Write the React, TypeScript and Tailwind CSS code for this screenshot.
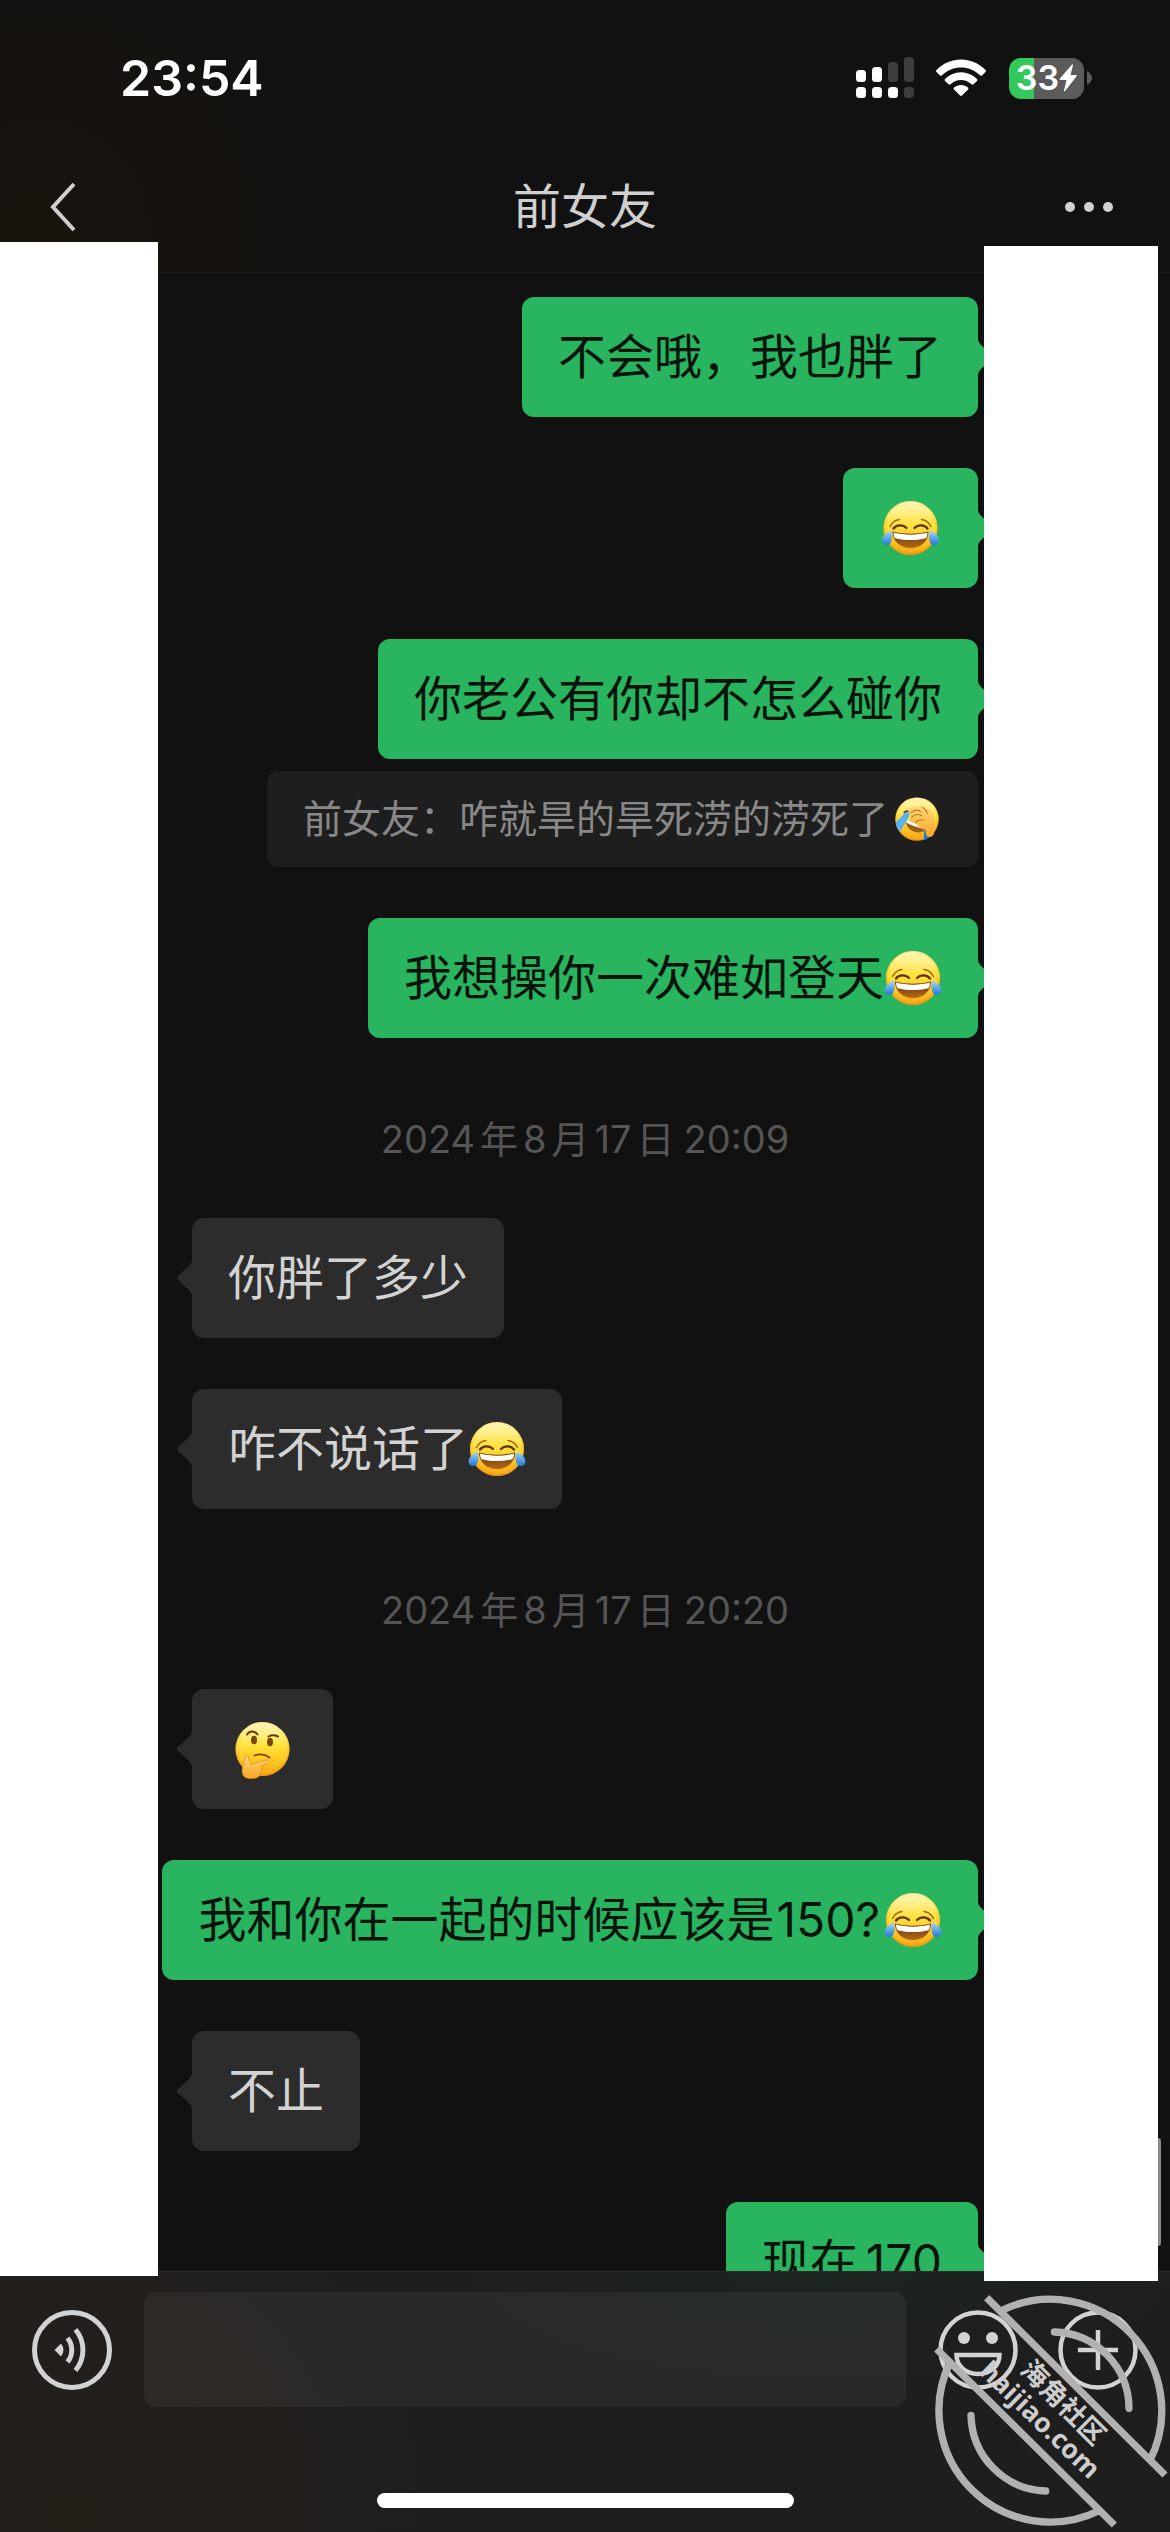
import type { ReactNode } from 'react'

type EmojiKind = 'joy' | 'facepalm' | 'thinking'

function FaceDefs({ id }: { id: string }) {
  return (
    <defs>
      <radialGradient id={`${id}-edge`} cx="50%" cy="46%" r="54%">
        <stop offset="0.78" stopColor="#ffde3a" stopOpacity="0" />
        <stop offset="1" stopColor="#e98a0c" />
      </radialGradient>
      <linearGradient id={`${id}-face`} x1="0" y1="0" x2="0" y2="1">
        <stop offset="0" stopColor="#fff4b8" />
        <stop offset="0.2" stopColor="#fff08a" />
        <stop offset="0.45" stopColor="#ffe13a" />
        <stop offset="0.75" stopColor="#fdc321" />
        <stop offset="1" stopColor="#f99c10" />
      </linearGradient>
      <linearGradient id={`${id}-tear`} x1="0" y1="0" x2="0" y2="1">
        <stop offset="0" stopColor="#a8dcf8" />
        <stop offset="1" stopColor="#2179d6" />
      </linearGradient>
      <linearGradient id={`${id}-mouth`} x1="0" y1="0" x2="0" y2="1">
        <stop offset="0" stopColor="#6b3206" />
        <stop offset="1" stopColor="#b06a18" />
      </linearGradient>
      <linearGradient id={`${id}-hand`} x1="0" y1="0" x2="0" y2="1">
        <stop offset="0" stopColor="#ffd980" />
        <stop offset="1" stopColor="#f9a51e" />
      </linearGradient>
    </defs>
  )
}

function Face({ id }: { id: string }) {
  return (
    <>
      <circle cx="30" cy="30" r="27" fill={`url(#${id}-face)`} />
      <circle cx="30" cy="30" r="27" fill={`url(#${id}-edge)`} />
    </>
  )
}

function Emoji({ kind, className }: { kind: EmojiKind; className: string }) {
  if (kind === 'joy') {
    return (
      <svg viewBox="0 0 60 60" className={className} role="img" aria-label="笑哭">
        <FaceDefs id="joy" />
        <Face id="joy" />
        <path d="M9.5 28.5C11.5 24.5 14.5 22 19 21.5" fill="none" stroke="#a8650f" strokeWidth="1.5" strokeLinecap="round" />
        <path d="M50.5 28.5C48.5 24.5 45.5 22 41 21.5" fill="none" stroke="#a8650f" strokeWidth="1.5" strokeLinecap="round" />
        <path d="M13 30.500C16 26.300 22.500 26.300 26 30" fill="none" stroke="#5f3208" strokeWidth="2.300" strokeLinecap="round" />
        <path d="M47 30.500C44 26.300 37.500 26.300 34 30" fill="none" stroke="#5f3208" strokeWidth="2.300" strokeLinecap="round" />
        <path d="M12 33.500C24 36.500 36 36.500 48 33.500C48 43.500 40 50 30 50S12 43.500 12 33.500Z" fill="url(#joy-mouth)" />
        <path d="M13 34.600C24 37.300 36 37.300 47 34.600C47 37 46.300 39.500 45.500 40.200C35 42.700 25 42.700 14.500 40.200C13.700 39.500 13 37 13 34.600Z" fill="#fff" />
        <path d="M10.500 32C12.500 39 11.500 47 6.500 47C0.500 47 0.500 40.500 4 37C6.500 34.500 8.500 33.500 10.500 32Z" fill="url(#joy-tear)" />
        <path d="M49.500 32C47.500 39 48.500 47 53.500 47C59.500 47 59.500 40.500 56 37C53.500 34.500 51.500 33.500 49.500 32Z" fill="url(#joy-tear)" />
      </svg>
    )
  }
  if (kind === 'facepalm') {
    return (
      <svg viewBox="0 0 60 60" className={className} role="img" aria-label="捂脸">
        <FaceDefs id="palm" />
        <Face id="palm" />
        <path d="M16 29C24 35 33 38 43 39C41 46 34 48 27 46C19 43.500 15 36 16 29Z" fill="#9c5a12" />
        <path d="M16 29C24 35 33 38 43 39L41.500 42C32 41.500 22 38 16.500 34Z" fill="#fff" />
        <path d="M15.500 21L22 22.500C18.500 31 13 39 8.500 45.500C5.500 42.500 4 38 3.500 34C8 30 12.500 25.500 15.500 21Z" fill="#58b1f0" />
        <path d="M39 43L46 45.500L45 53C42.500 55 40.500 55.700 38.500 56Z" fill="#1e78cf" />
        <path d="M14 21.500C16 19.500 19 20 22 20" stroke="#5f3208" strokeWidth="2" fill="none" strokeLinecap="round" />
        <path d="M18.500 20C20 16 25 13.500 29 14.500C34 12 42 14 46 19C51 24 53 33 52.500 40C52.500 46 51 52 46 52.500C42 53 40.500 49 41 44C36 42 31 39.500 28 35C23 34 21 31 23 28C19.500 26.500 19.500 23.500 22 22Z" fill="url(#palm-hand)" />
        <path d="M22 22.500C26 18.500 31 18 35 21M23 28C27 24 32 23.500 36 26M28 34.500C31 31 35 30.500 38 31.500M37 15.500C40 17.500 42 20 43 23" stroke="#c9780f" strokeWidth="1.300" fill="none" strokeLinecap="round" />
      </svg>
    )
  }
  return (
    <svg viewBox="0 0 60 60" className={className} role="img" aria-label="思考">
      <FaceDefs id="think" />
      <Face id="think" />
      <path d="M14.500 15.500C17 11.500 22 11.500 25 15.500" fill="none" stroke="#6b3a0a" strokeWidth="2" strokeLinecap="round" />
      <path d="M36 17.500C39 15.800 42.500 16 45.500 17.500" fill="none" stroke="#6b3a0a" strokeWidth="2" strokeLinecap="round" />
      <ellipse cx="21.500" cy="21" rx="3" ry="4.300" fill="#7a4508" />
      <ellipse cx="37.500" cy="23" rx="3" ry="4.300" fill="#7a4508" />
      <path d="M22 36.500C27 34.500 33 35.500 37 38.500" fill="none" stroke="#7a4508" strokeWidth="1.700" strokeLinecap="round" />
      <path
        d="M12.500 38C13 35 16 35.500 16 38.500L18.500 45C23 44.500 29 42 34 41C37.500 40.500 38 43.500 35 44.500L29 47C30 50 29 55 26.500 57.500C23.500 60 14.500 60.500 11.500 57.500C9 54.500 9.500 50 10.500 46Z"
        fill="url(#think-hand)"
        stroke="#d98b12"
        strokeWidth="0.700"
      />
    </svg>
  )
}

const JOY = <Emoji kind="joy" className="-mx-px size-[60px] shrink-0" />

function Tail({ side }: { side: 'left' | 'right' }) {
  return side === 'right' ? (
    <svg viewBox="0 0 16 36" className="absolute top-[42px] left-full h-9 w-4 text-[#29b560]" aria-hidden="true">
      <path d="M-1 0H0Q0 3 3 6L12 14Q16 18 12 22L3 30Q0 33 0 36H-1Z" fill="currentColor" />
    </svg>
  ) : (
    <svg viewBox="0 0 16 36" className="absolute top-[42px] right-full h-9 w-4 text-[#2c2c2c]" aria-hidden="true">
      <path d="M17 0H16Q16 3 13 6L2 16Q0 18 2 20L13 30Q16 33 16 36H17Z" fill="currentColor" />
    </svg>
  )
}

function Sent({ children }: { children: ReactNode }) {
  return (
    <div className="relative flex h-[120px] shrink-0 items-center self-end rounded-xl bg-[#29b560] px-9 text-5xl whitespace-nowrap text-[#06140b]">
      {children}
      <Tail side="right" />
    </div>
  )
}

function Received({ children }: { children: ReactNode }) {
  return (
    <div className="relative flex h-[120px] shrink-0 items-center self-start rounded-xl bg-[#2c2c2c] px-9 text-5xl whitespace-nowrap text-[#d3d3d3]">
      {children}
      <Tail side="left" />
    </div>
  )
}

function Timestamp({ time }: { time: string }) {
  return (
    <time className="flex h-[78px] shrink-0 items-end justify-center gap-[5px] text-[38px] leading-[56px] whitespace-nowrap text-[#555555]">
      <span>2024</span>
      <span>年</span>
      <span>8</span>
      <span>月</span>
      <span>17</span>
      <span>日</span>
      <span className="ml-1">{time}</span>
    </time>
  )
}

function StatusBar() {
  return (
    <div className="flex h-[141px] items-center justify-between pt-[15px] pr-[78px] pl-[120px] text-white">
      <span className="text-[50px] leading-none font-semibold">23:54</span>
      <div className="flex items-center">
        <svg viewBox="0 0 58 42" className="mr-[22px] h-[42px] w-[58px]" fill="currentColor" role="img" aria-label="信号">
          <rect x="0" y="13" width="10" height="12" rx="3.500" />
          <rect x="16" y="10" width="10" height="15" rx="3.500" />
          <rect x="32" y="5" width="10" height="20" rx="3.500" fill="#3d3d3d" />
          <rect x="48" y="0" width="10" height="25" rx="3.500" fill="#3d3d3d" />
          <rect x="0" y="30" width="10" height="11" rx="3.500" />
          <rect x="16" y="30" width="10" height="11" rx="3.500" />
          <rect x="32" y="30" width="10" height="11" rx="3.500" />
          <rect x="48" y="30" width="10" height="11" rx="3.500" fill="#3d3d3d" />
        </svg>
        <svg viewBox="0 0 50 38" className="mr-[23px] h-[38px] w-[50px]" fill="currentColor" role="img" aria-label="Wi-Fi">
          <path d="M0.500 11C14 -3 36 -3 49.500 11Q50.500 12 49.500 13L46 16.500Q45 17 44 16.200C33.500 5.800 16.500 5.800 6 16.200Q5 17 4 16.500L0.500 13Q-0.500 12 0.500 11Z" />
          <path d="M9 20C18 11 32 11 41 20Q42 21 41 22L37.500 25.300Q36.500 26 35.500 25.200C29.500 19.500 20.500 19.500 14.500 25.200Q13.500 26 12.500 25.300L9 22Q8 21 9 20Z" />
          <path d="M18 28.500C22 25 28 25 32 28.500Q33 29.500 32 30.500L26 36.500Q25 37.300 24 36.500L18 30.500Q17 29.500 18 28.500Z" />
        </svg>
        <div className="flex h-[41px] w-[75px] items-center justify-center rounded-[12px] bg-[linear-gradient(to_right,#34c85a_33%,#5b5b5b_33%)]">
          <span className="text-[34px] leading-none font-semibold">33</span>
          <svg viewBox="0 0 18 28" className="h-7 w-[18px]" fill="currentColor" aria-hidden="true">
            <path d="M13 0.500Q14 0 14 1.500L11.500 11H17Q18.500 11.200 17.500 12.500L6 27Q4.500 28 5 26.300L7.500 16H1.500Q0 15.800 1 14.500Z" />
          </svg>
        </div>
        <svg viewBox="0 0 5 14" className="ml-[3px] h-[14px] w-[5px]" fill="#5b5b5b" aria-hidden="true">
          <path d="M0 0Q5 3 5 7T0 14Z" />
        </svg>
      </div>
    </div>
  )
}

function Watermark() {
  return (
    <svg viewBox="0 0 810 846" className="pointer-events-none absolute right-0 bottom-0 z-20 h-[282px] w-[270px]" aria-label="海角社区 haijiao.com">
      <g fill="none" stroke="#b1b1b1" strokeWidth="22">
        <path d="M260 143L795 675M110 297L643 825" />
        <path d="M308 180A334 334 0 0 1 748 635" />
        <path d="M152 333A334 334 0 0 0 600 781" />
        <path d="M463 246A230 230 0 0 1 687 475M213 496A232 232 0 0 0 437 723" strokeLinecap="round" />
      </g>
      <g fill="#cdcdcd" fontWeight="700">
        <text transform="translate(357 364) rotate(45)" fontSize="80" fontFamily='"Noto Sans CJK SC", sans-serif'>
          海角社区
        </text>
        <text transform="translate(234 368) rotate(44)" fontSize="80" fontFamily='"Open Sans", sans-serif'>
          haijiao.com
        </text>
      </g>
    </svg>
  )
}

export default function App() {
  return (
    <div className="relative flex h-screen flex-col overflow-hidden bg-[#111111] font-['Inter','Noto_Sans_CJK_SC',sans-serif]">
      <header className="shrink-0 border-b border-[#1e1e1e] bg-[radial-gradient(circle_at_40px_230px,#19140e,#111111_380px)]">
        <StatusBar />
        <div className="grid h-[131px] grid-cols-3 items-center px-[50px] text-[#d0d0d0]">
          <button type="button" aria-label="返回" className="justify-self-start">
            <svg viewBox="0 0 26 50" className="h-[50px] w-[26px]" fill="none" stroke="currentColor" strokeWidth="4">
              <path d="M24 2L3 25L24 48" />
            </svg>
          </button>
          <h1 className="justify-self-center text-5xl">前女友</h1>
          <button type="button" aria-label="更多" className="mr-1.5 justify-self-end">
            <svg viewBox="0 0 50 12" className="h-3 w-[50px]" fill="currentColor">
              <circle cx="6" cy="6" r="5" />
              <circle cx="25" cy="6" r="5" />
              <circle cx="44" cy="6" r="5" />
            </svg>
          </button>
        </div>
      </header>

      <main className="flex min-h-0 flex-1">
        <div className="relative z-10 -mt-[31px] -mb-[5px] w-[158px] shrink-0 bg-white" />
        <section aria-label="聊天记录" className="flex min-w-0 flex-1 flex-col gap-[51px] overflow-hidden pt-6 pr-[6px] pl-[34px]">
          <Sent>不会哦，我也胖了</Sent>
          <Sent>
            <Emoji kind="joy" className="h-[60px] w-[63px]" />
          </Sent>
          <div className="flex shrink-0 flex-col items-end gap-3">
            <Sent>你老公有你却不怎么碰你</Sent>
            <blockquote className="flex h-24 items-center rounded-xl bg-[#1e1e1e] px-9 text-[39px] whitespace-nowrap text-[#888888]">
              前女友：咋就旱的旱死涝的涝死了
              <Emoji kind="facepalm" className="ml-1 h-12 w-[50px]" />
            </blockquote>
          </div>
          <Sent>我想操你一次难如登天{JOY}</Sent>
          <Timestamp time="20:09" />
          <Received>你胖了多少</Received>
          <Received>咋不说话了{JOY}</Received>
          <Timestamp time="20:20" />
          <Received>
            <Emoji kind="thinking" className="h-[60px] w-[69px]" />
          </Received>
          <Sent>
            我和你在一起的时候应该是<span className="mr-1 ml-0.5">150?</span>
            {JOY}
          </Sent>
          <Received>不止</Received>
          <Sent>
            现在<span className="ml-2">170</span>
          </Sent>
        </section>
        <div className="relative z-10 -mt-[27px] -mb-[10px] w-[174px] shrink-0 bg-white" />
        <div className="flex w-3 shrink-0 flex-col justify-end pb-[25px]">
          <div className="h-[108px] w-[3px] rounded-r-sm bg-[#8a8a8a]" />
        </div>
      </main>

      <footer className="flex h-[261px] shrink-0 flex-col justify-between border-t border-[#2b2b2b] bg-[#1e1e1e] bg-[radial-gradient(circle_at_70px_240px,#251f1a,transparent_420px),radial-gradient(ellipse_at_70%_0%,#1c2420,transparent_360px)] pt-5 pb-6">
        <div className="flex items-center px-8 text-[#d3d3d3]">
          <button type="button" aria-label="语音" className="mr-8 shrink-0">
            <svg viewBox="0 0 80 80" className="size-20" fill="none" stroke="currentColor" strokeWidth="5">
              <circle cx="40" cy="40" r="37.500" />
              <path d="M22.500 40L29 33.500Q34 40 29 46.500Z" fill="currentColor" stroke="none" />
              <path d="M35.500 28A19 19 0 0 1 35.500 52M43.500 19.500A32 32 0 0 1 43.500 60.500" />
            </svg>
          </button>
          <input type="text" aria-label="输入消息" className="h-[115px] min-w-0 flex-1 rounded-xl bg-white/5 px-6 text-5xl outline-none" />
          <button type="button" aria-label="表情" className="mr-10 ml-8 shrink-0">
            <svg viewBox="0 0 80 80" className="size-20" fill="none" stroke="currentColor" strokeWidth="4.500">
              <circle cx="40" cy="40" r="37.500" />
              <circle cx="26" cy="28" r="6" fill="currentColor" stroke="none" />
              <circle cx="54" cy="28" r="6" fill="currentColor" stroke="none" />
              <path d="M18.500 45H61.500C61.500 56 52 64 40 64S18.500 56 18.500 45Z" />
            </svg>
          </button>
          <button type="button" aria-label="更多功能" className="shrink-0">
            <svg viewBox="0 0 80 80" className="size-20" fill="none" stroke="currentColor" strokeWidth="4.500">
              <circle cx="40" cy="40" r="37.500" />
              <path d="M40 20V60M20 40H60" />
            </svg>
          </button>
        </div>
        <div className="h-[15px] w-[417px] self-center rounded-full bg-white" />
      </footer>
      <Watermark />
    </div>
  )
}
